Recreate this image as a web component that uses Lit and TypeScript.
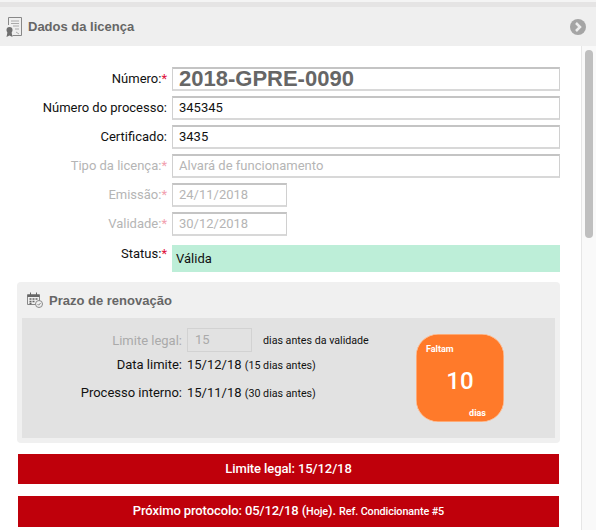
import { LitElement, html, css } from "lit";
import { customElement } from "lit/decorators.js";

@customElement("app-root")
export class AppRoot extends LitElement {
  static styles = css`
    :host { display: block; width: 596px; height: 530px; overflow: hidden; background: #fff; font-family: Roboto, "Liberation Sans", sans-serif; font-size: 13px; color: #111; }
    .top { height: 2px; background: #f4f4f4; }
    .band { height: 5px; background: #e5e4e4; }
    .head { height: 39px; background: #efefef; display: flex; align-items: center; padding: 0 10px 0 6px; gap: 6px; }
    .head h1 { flex: 1; margin: 0; font-size: 13px; font-weight: 700; color: #666; font-family: "Liberation Sans", sans-serif; }
    .body { display: flex; height: 484px; }
    .main { width: 581px; box-sizing: border-box; padding: 21px 21px 0 17px; overflow: hidden; }
    .scroll { width: 15px; box-sizing: border-box; background: #f9f9f9; border-left: 1px solid #e6e6e6; padding: 4px 3px 0 3px; }
    .thumb { width: 8px; height: 188px; background: #bfbfbf; border-radius: 4px; }
    .row { display: flex; height: 24px; margin-bottom: 5px; }
    .lab { width: 150px; margin-right: 5px; text-align: right; line-height: 24px; flex: none; }
    .lab i { color: #e0103a; font-style: normal; }
    .dis .lab { color: #b5b5b5; }
    .dis .lab i { color: #f2a0ae; }
    .inp { flex: 1; box-sizing: border-box; border: 2px solid #d8d8d8; border-top-color: #c4c4c4; border-left-width: 1px; border-right-width: 1px; border-left-color: #d0d0d0; border-right-color: #d0d0d0; padding-left: 6px; line-height: 20px; }
    .big { font-size: 22px; font-weight: 700; color: #666; font-family: "Liberation Sans", sans-serif; }
    .dis .inp { color: #b5b5b5; }
    .date { flex: none; width: 115px; }
    .status { height: 27px; margin: 9px 0 10px; display: flex; }
    .status .lab { line-height: 18px; }
    .pill { flex: 1; background: #bdeed8; padding: 4px 4px 0; line-height: 20px; color: #111; }
    .box { height: 161px; box-sizing: border-box; background: #f0f0f0; border-radius: 4px; padding: 0 5px 5px; }
    .bh { height: 36px; display: flex; align-items: center; gap: 5px; padding-left: 4px; }
    .bh h2 { margin: 0; font-size: 13px; font-weight: 700; color: #666; font-family: "Liberation Sans", sans-serif; }
    .inner { height: 120px; box-sizing: border-box; background: #e2e2e2; padding: 10px 0 0; display: flex; }
    .grid { width: 394px; flex: none; font-size: 13px; }
    .line { display: flex; align-items: center; height: 24px; }
    .line .l { width: 160px; text-align: right; margin-right: 5px; flex: none; }
    .muted { color: #aaa; }
    .num { width: 65px; height: 24px; box-sizing: border-box; border: 1px solid #d2d2d2; background: #e2e2e2; color: #aaa; padding-left: 7px; line-height: 22px; margin-right: 11px; }
    small { font-size: 10.7px; }
    .badge { width: 88px; height: 88px; margin-top: 6px; box-sizing: border-box; background: #ff7a2a; border-radius: 22px; box-shadow: inset 0 0 0 .5px #fcd9c0; color: #fff; position: relative; text-align: center; font-size: 24px; line-height: 94px; font-weight: 500; }
    .badge span { position: absolute; font-size: 9px; line-height: 10px; font-weight: 700; }
    .badge .f { left: 10px; top: 10px; }
    .badge .d { right: 18px; bottom: 4px; }
    .alert { height: 30px; margin-left: 1px; margin-right: 1px; background: #bf000b; color: #fff; font-weight: 500; text-align: center; line-height: 29px; font-size: 13px; letter-spacing: -.1px; margin-top: 11px; }
    .alert.next { height: 31px; line-height: 30px; margin-top: 12px; }
    .alert small { font-size: 10.8px; }
  `;
  row(label: string, req: boolean, value: unknown, cls = "", inpCls = "") {
    return html`<div class="row ${cls}"><div class="lab">${label}:${req ? html`<i>*</i>` : ""}</div><div class="inp ${inpCls}">${value}</div></div>`;
  }
  render() {
    return html`
      <div class="top"></div><div class="band"></div>
      <div class="head">
        <svg width="16" height="20" viewBox="0 0 16 20" fill="none" stroke="#888" stroke-width="1">
          <path d="M2.500 8V.5h13v18h-9" /><path d="M5 4h8M5 6.500h8M7 9h6M9 12h4M10 15l3 2" stroke="#aaa"/>
          <circle cx="3.500" cy="13" r="3" fill="#6f6f6f" stroke="none"/><path d="M1.500 15l-1 5 3-1.500 3 1.500-1-5z" fill="#6f6f6f" stroke="none"/>
        </svg>
        <h1>Dados da licença</h1>
        <svg width="16" height="16" viewBox="0 0 16 16"><circle cx="8" cy="8" r="8" fill="#a5a5a5"/><path d="M6 4l4 4-4 4" fill="none" stroke="#eee" stroke-width="2.500"/></svg>
      </div>
      <div class="body">
        <div class="main">
          ${this.row("Número", true, "2018-GPRE-0090", "", "big")}
          ${this.row("Número do processo", false, "345345")}
          ${this.row("Certificado", false, "3435")}
          ${this.row("Tipo da licença", true, "Alvará de funcionamento", "dis")}
          ${this.row("Emissão", true, "24/11/2018", "dis", "date")}
          ${this.row("Validade", true, "30/12/2018", "dis", "date")}
          <div class="status"><div class="lab">Status:<i>*</i></div><div class="pill">Válida</div></div>
          <div class="box">
            <div class="bh">
              <svg width="18" height="16" viewBox="0 0 18 16" fill="none" stroke="#666">
                <path d="M1.500 12.500V2.500h12v10z" stroke="#888"/><path d="M1.500 4h12" stroke-width="2"/><path d="M4.500 .5v2.500M10.500 .5v2.500"/>
                <path d="M3.500 7h2M6.500 7h2M9.500 7h2M3.500 9.500h2M6.500 9.500h2M3.500 11.500h2" stroke-width="1.400"/>
                <circle cx="13" cy="12" r="3.500" stroke="#888" fill="#f0f0f0"/><path d="M11.500 12l1.200 1.200 1.900-2.200" stroke="#888"/>
              </svg>
              <h2>Prazo de renovação</h2>
            </div>
            <div class="inner">
              <div class="grid">
                <div class="line"><div class="l muted">Limite legal:</div><div class="num">15</div><small>dias antes da validade</small></div>
                <div class="line"><div class="l">Data limite:</div><div>15/12/18 <small>(15 dias antes)</small></div></div>
                <div class="line" style="margin-top:4px"><div class="l">Processo interno:</div><div>15/11/18 <small>(30 dias antes)</small></div></div>
              </div>
              <div class="badge"><span class="f">Faltam</span>10<span class="d">dias</span></div>
            </div>
          </div>
          <div class="alert">Limite legal: 15/12/18</div>
          <div class="alert next">Próximo protocolo: 05/12/18 (<small>Hoje</small>). <small>Ref. Condicionante #5</small></div>
        </div>
        <div class="scroll"><div class="thumb"></div></div>
      </div>
    `;
  }
}
